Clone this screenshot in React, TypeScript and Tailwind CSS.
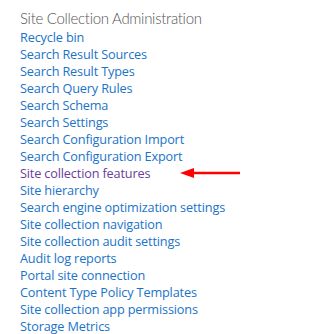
import React from "react";

const links = [
  "Recycle bin",
  "Search Result Sources",
  "Search Result Types",
  "Search Query Rules",
  "Search Schema",
  "Search Settings",
  "Search Configuration Import",
  "Search Configuration Export",
  "Site collection features",
  "Site hierarchy",
  "Search engine optimization settings",
  "Site collection navigation",
  "Site collection audit settings",
  "Audit log reports",
  "Portal site connection",
  "Content Type Policy Templates",
  "Site collection app permissions",
  "Storage Metrics",
];

export default function App() {
  return (
    <div
      className="w-[320px] h-[334px] bg-white overflow-hidden pl-[20px] pt-[7px]"
      style={{ fontFamily: '"Open Sans", "Noto Sans", sans-serif' }}
    >
      <div
        className="text-[15px] pt-[1px] leading-[21px] text-[#555] font-light tracking-[-0.3px]"
        style={{ fontFamily: 'Lato, "Open Sans", sans-serif' }}
      >
        Site Collection Administration
      </div>
      <ul className="flex flex-col">
        {links.map((l) => (
          <li key={l} className="relative text-[12.7px] leading-[17px] tracking-[-0.15px]">
            <a
              className={
                l === "Site collection features" ? "text-[#6a3d9a]" : "text-[#1a73c8]"
              }
            >
              {l}
            </a>
            {l === "Site collection features" && (
              <svg
                className="absolute left-[160px] top-[1px]"
                width="62"
                height="14"
                viewBox="0 0 62 14"
              >
                <line x1="10" y1="7" x2="60" y2="7" stroke="#f00" strokeWidth="2.5" />
                <polygon points="0,7 14,2 14,12" fill="#f00" />
              </svg>
            )}
          </li>
        ))}
      </ul>
    </div>
  );
}
